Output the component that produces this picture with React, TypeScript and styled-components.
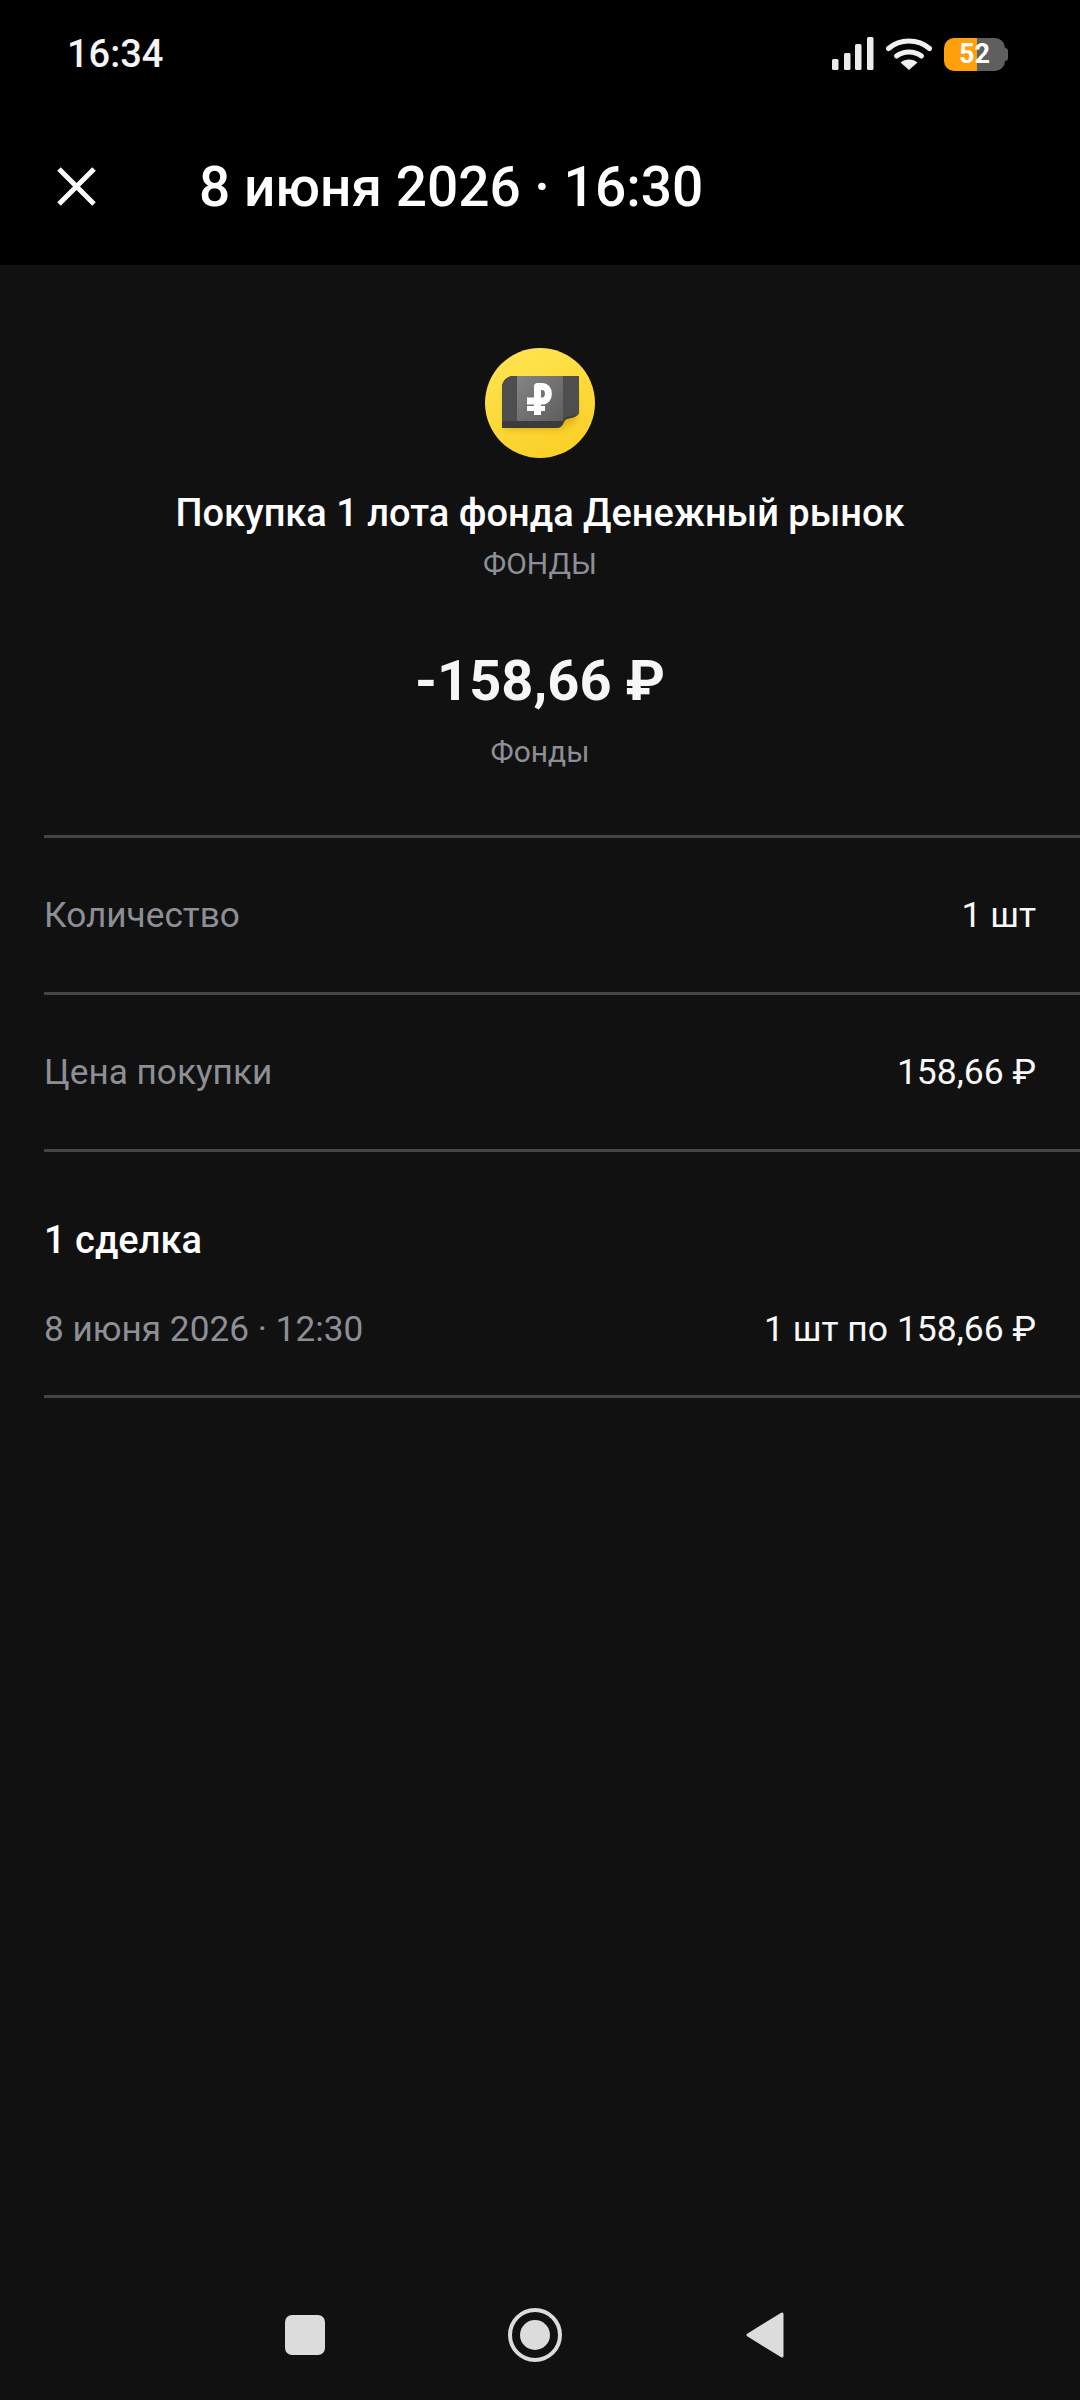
import React from 'react';
import styled, { createGlobalStyle } from 'styled-components';

const GlobalStyle = createGlobalStyle`
  html, body {
    margin: 0;
    padding: 0;
    background: #111112;
  }
  * {
    box-sizing: border-box;
  }
`;

const Screen = styled.div`
  width: 1080px;
  height: 2400px;
  display: flex;
  flex-direction: column;
  background: #111112;
  color: #fff;
  font-family: Roboto, "Noto Sans", sans-serif;
  overflow: hidden;
`;

const StatusBar = styled.div`
  height: 108px;
  display: flex;
  align-items: center;
  justify-content: space-between;
  padding: 0 72px 0 67px;
  background: #000;
`;

const Clock = styled.span`
  font-size: 38px;
  font-weight: 500;
  color: #f4f4f4;
`;

const StatusIcons = styled.div`
  display: flex;
  align-items: center;
  gap: 12px;
`;

const Battery = styled.div`
  position: relative;
  width: 61px;
  height: 33px;
  border-radius: 10px;
  overflow: hidden;
  display: flex;
  align-items: center;
  justify-content: center;
  background: linear-gradient(to right, #ff9f0a 0 54%, #5f5f5f 54% 100%);
  font-size: 27px;
  font-weight: 700;
  color: #fff;
`;

const BatteryWrap = styled.div`
  display: flex;
  align-items: center;
`;

const BatteryNub = styled.div`
  width: 3px;
  height: 13px;
  border-radius: 0 3px 3px 0;
  background: #5f5f5f;
`;

const Header = styled.header`
  height: 157px;
  display: flex;
  align-items: center;
  gap: 103px;
  padding-left: 57px;
  background: #000;
`;

const HeaderTitle = styled.h1`
  margin: 0;
  font-size: 55px;
  font-weight: 500;
  line-height: 64px;
`;

const Content = styled.main`
  flex: 1;
  display: flex;
  flex-direction: column;
`;

const Hero = styled.section`
  display: flex;
  flex-direction: column;
  align-items: center;
  padding: 83px 0 60px;
`;

const OperationTitle = styled.h2`
  margin: 27px 0 0;
  font-size: 38px;
  font-weight: 500;
  line-height: 56px;
`;

const Muted = styled.div`
  font-size: 30px;
  line-height: 46px;
  color: #8c8f95;
`;

const Amount = styled.div`
  margin: 58px 0 12px;
  font-size: 56px;
  font-weight: 700;
  line-height: 72px;
  color: #f6f6f6;
`;

const List = styled.div`
  margin-left: 44px;
`;

const Row = styled.div`
  height: 157px;
  display: flex;
  align-items: center;
  justify-content: space-between;
  padding-right: 44px;
  border-top: 3px solid #454545;
`;

const Deals = styled.div`
  height: 249px;
  padding: 60px 44px 0 0;
  border-top: 3px solid #454545;
  border-bottom: 3px solid #454545;
`;

const DealsTitle = styled.h3`
  margin: 0 0 37px;
  font-size: 38px;
  font-weight: 500;
  line-height: 56px;
`;

const DealRow = styled.div`
  display: flex;
  align-items: center;
  justify-content: space-between;
`;

const Label = styled.span`
  font-size: 35.2px;
  line-height: 48px;
  color: #8c8f95;
`;

const Value = styled.span`
  font-size: 35.5px;
  line-height: 48px;
  color: #f8f8f8;
`;

const NavBar = styled.nav`
  height: 120px;
  display: flex;
  align-items: flex-start;
  justify-content: center;
  gap: 170px;
  padding: 25px 10px 0 0;
`;

const NavSlot = styled.div`
  width: 60px;
  height: 60px;
  display: flex;
  align-items: center;
  justify-content: center;
`;

const Square = styled.div`
  width: 40px;
  height: 40px;
  border-radius: 7px;
  background: #dcdcdc;
`;

const SignalIcon = () => (
  <svg width="42" height="34" viewBox="0 0 42 34">
    <rect x="0" y="22" width="6.5" height="11" rx="1.5" fill="#ececec" />
    <rect x="12" y="16" width="6.5" height="17" rx="1.5" fill="#ececec" />
    <rect x="23" y="7" width="6.5" height="26" rx="1.5" fill="#ececec" />
    <rect x="35" y="0" width="6.5" height="33" rx="1.5" fill="#ececec" />
  </svg>
);

const WifiIcon = () => (
  <svg width="46" height="34" viewBox="0 0 46 34" fill="none">
    <path d="M2.5 11.5C14 1.5 32 1.5 43.5 11.5" stroke="#f0f0f0" strokeWidth="5" strokeLinecap="round" />
    <path d="M10.5 19C17.5 13.5 28.5 13.5 35.5 19" stroke="#f0f0f0" strokeWidth="5" strokeLinecap="round" />
    <path d="M23 33L14.5 25.5C19 21.5 27 21.5 31.5 25.5Z" fill="#f0f0f0" />
  </svg>
);

const CloseIcon = () => (
  <svg width="39" height="39" viewBox="0 0 39 39" fill="none">
    <path d="M2 2L37 37M37 2L2 37" stroke="#fff" strokeWidth="5" />
  </svg>
);

const FundIcon = () => (
  <svg width="110" height="110" viewBox="0 0 110 110">
    <defs>
      <linearGradient id="coin" x1="0.3" y1="0" x2="0.7" y2="1">
        <stop offset="0" stopColor="#ffe44f" />
        <stop offset="1" stopColor="#fbcf25" />
      </linearGradient>
      <linearGradient id="face" x1="0" y1="0" x2="1" y2="1">
        <stop offset="0" stopColor="#858585" />
        <stop offset="1" stopColor="#5e5e5e" />
      </linearGradient>
      <filter id="soft" x="-20%" y="-20%" width="140%" height="140%">
        <feGaussianBlur stdDeviation="3" />
      </filter>
    </defs>
    <circle cx="55" cy="55" r="55" fill="url(#coin)" />
    <path d="M20 82H76L92 72V40H20Z" fill="#c99a10" opacity="0.55" filter="url(#soft)" />
    <path d="M17 80H72C79 80 78 72 82 71C88 70 94 68 94 64V28H29C22 28 17 33 17 40Z" fill="#3c3c3c" />
    <path d="M17 73H74C78 73 78 70 82 69C88 68 94 67 94 64V28H29C22 28 17 33 17 40Z" fill="#4e4e4e" />
    <rect x="32" y="28" width="46" height="45" fill="url(#face)" />
    <path
      d="M52.5 67V38.5H57C65.5 38.5 65.5 53 57 53H42"
      fill="none"
      stroke="#fff"
      strokeWidth="7"
      strokeLinejoin="round"
    />
    <path d="M42 60.5H60" fill="none" stroke="#fff" strokeWidth="5" />
  </svg>
);

const HomeIcon = () => (
  <svg width="54" height="54" viewBox="0 0 54 54">
    <circle cx="27" cy="27" r="25" fill="none" stroke="#dcdcdc" strokeWidth="4" />
    <circle cx="27" cy="27" r="15" fill="#dcdcdc" />
  </svg>
);

const BackIcon = () => (
  <svg width="38" height="46" viewBox="0 0 38 46">
    <path
      d="M36 2V44L2 23Z"
      fill="#dcdcdc"
      stroke="#dcdcdc"
      strokeWidth="3"
      strokeLinejoin="round"
    />
  </svg>
);

const App: React.FC = () => {
  return (
    <Screen>
      <GlobalStyle />
      <StatusBar>
        <Clock>16:34</Clock>
        <StatusIcons>
          <SignalIcon />
          <WifiIcon />
          <BatteryWrap>
            <Battery>52</Battery>
            <BatteryNub />
          </BatteryWrap>
        </StatusIcons>
      </StatusBar>
      <Header>
        <CloseIcon />
        <HeaderTitle>8 июня 2026 · 16:30</HeaderTitle>
      </Header>
      <Content>
        <Hero>
          <FundIcon />
          <OperationTitle>Покупка 1 лота фонда Денежный рынок</OperationTitle>
          <Muted>ФОНДЫ</Muted>
          <Amount>-158,66 ₽</Amount>
          <Muted>Фонды</Muted>
        </Hero>
        <List>
          <Row>
            <Label>Количество</Label>
            <Value>1 шт</Value>
          </Row>
          <Row>
            <Label>Цена покупки</Label>
            <Value>158,66 ₽</Value>
          </Row>
          <Deals>
            <DealsTitle>1 сделка</DealsTitle>
            <DealRow>
              <Label>8 июня 2026 · 12:30</Label>
              <Value>1 шт по 158,66 ₽</Value>
            </DealRow>
          </Deals>
        </List>
      </Content>
      <NavBar>
        <NavSlot>
          <Square />
        </NavSlot>
        <NavSlot>
          <HomeIcon />
        </NavSlot>
        <NavSlot>
          <BackIcon />
        </NavSlot>
      </NavBar>
    </Screen>
  );
};

export default App;
